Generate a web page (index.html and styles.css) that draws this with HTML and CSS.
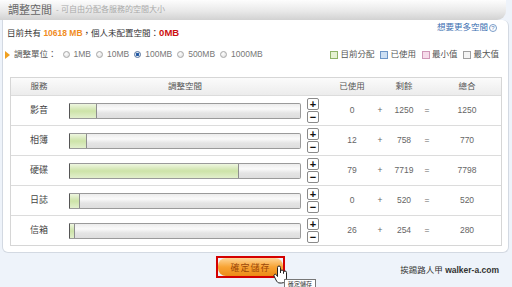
FILE: index.html
```html
<!DOCTYPE html>
<html lang="zh-Hant">
<head>
    <meta charset="UTF-8">
    <title>調整空間</title>
    <link rel="stylesheet" href="styles.css">
</head>
<body>
    <header class="title-bar">
        <span class="title">調整空間</span>
        <span class="subtitle">- 可自由分配各服務的空間大小</span>
    </header>

    <main class="panel">
        <div class="top-line">
            <p class="summary">目前共有 <b class="total">10618 MB</b>，個人未配置空間：<b class="free">0MB</b></p>
            <a href="#" class="more-link">想要更多空間<span class="help">?</span></a>
        </div>

        <div class="unit-row">
            <div class="units">
                <span class="arrow"></span>
                <span class="unit-label">調整單位：</span>
                <label class="radio"><span class="dot"></span>1MB</label>
                <label class="radio"><span class="dot"></span>10MB</label>
                <label class="radio"><span class="dot checked"></span>100MB</label>
                <label class="radio"><span class="dot"></span>500MB</label>
                <label class="radio"><span class="dot"></span>1000MB</label>
            </div>
            <div class="legend">
                <span class="key"><span class="box green"></span>目前分配</span>
                <span class="key"><span class="box blue"></span>已使用</span>
                <span class="key"><span class="box pink"></span>最小值</span>
                <span class="key"><span class="box gray"></span>最大值</span>
            </div>
        </div>

        <div class="quota-table">
            <div class="row head">
                <span>服務</span>
                <span>調整空間</span>
                <span></span>
                <span>已使用</span>
                <span></span>
                <span>剩餘</span>
                <span></span>
                <span>總合</span>
            </div>
            <div class="row">
                <span class="name">影音</span>
                <span class="bar"><span class="fill" style="width: 27px"></span></span>
                <span class="steps"><i>+</i><i>−</i></span>
                <span>0</span><span>+</span><span>1250</span><span>=</span><span>1250</span>
            </div>
            <div class="row">
                <span class="name">相簿</span>
                <span class="bar"><span class="fill" style="width: 17px"></span></span>
                <span class="steps"><i>+</i><i>−</i></span>
                <span>12</span><span>+</span><span>758</span><span>=</span><span>770</span>
            </div>
            <div class="row">
                <span class="name">硬碟</span>
                <span class="bar"><span class="fill" style="width: 169px"></span></span>
                <span class="steps"><i>+</i><i>−</i></span>
                <span>79</span><span>+</span><span>7719</span><span>=</span><span>7798</span>
            </div>
            <div class="row">
                <span class="name">日誌</span>
                <span class="bar"><span class="fill" style="width: 10px"></span></span>
                <span class="steps"><i>+</i><i>−</i></span>
                <span>0</span><span>+</span><span>520</span><span>=</span><span>520</span>
            </div>
            <div class="row">
                <span class="name">信箱</span>
                <span class="bar"><span class="fill" style="width: 5px"></span></span>
                <span class="steps"><i>+</i><i>−</i></span>
                <span>26</span><span>+</span><span>254</span><span>=</span><span>280</span>
            </div>
        </div>
    </main>

    <footer class="actions">
        <span class="focus-ring"><button class="save">確定儲存</button></span>
        <span class="credit">挨踢路人甲 <b>walker-a.com</b></span>
    </footer>

    <!-- mouse pointer and tooltip over the save button -->
    <svg class="pointer" width="16" height="20" viewBox="0 0 16 20">
        <path d="M4.5 11.5V2.5a1.5 1.5 0 0 1 3 0V8V6.5a1.5 1.5 0 0 1 3 0V8.5V7.5a1.5 1.5 0 0 1 3 0V13c0 3-2 5-5 5H7c-2 0-3-1-4-3l-2-4a1.3 1.3 0 0 1 2.2-1.3Z" fill="#fff" stroke="#222" stroke-width="1"/>
    </svg>
    <div class="tooltip">確定儲存</div>
</body>
</html>
```

FILE: styles.css
```css
/* Basic Reset */
* {
    margin: 0;
    padding: 0;
    box-sizing: border-box;
}

html, body {
    height: 287px;
    overflow: hidden;
}

body {
    position: relative;
    background: #eef3fa;
    color: #444;
    font-family: "Liberation Sans", "Noto Sans CJK TC", sans-serif;
    font-size: 8.5px;
    line-height: 1.3;
}

/* Title bar */
.title-bar {
    display: flex;
    align-items: center;
    gap: 4px;
    height: 20px;
    margin-right: 6px;
    padding-left: 8px;
    background: linear-gradient(#fdfdfd, #e9e9e9 55%, #d2d2d2);
    border-radius: 0 0 9px 0;
}

.title {
    font-size: 11px;
    color: #666;
}

.subtitle {
    font-size: 8px;
    color: #aaa;
}

/* Main panel */
.panel {
    margin: 0 3px 0 2px;
    padding: 0 6px 6px 2px;
    background: #fff;
    border: 1px solid #d3d9e2;
    border-top: none;
    border-radius: 0 6px 6px 6px;
}

.top-line {
    display: flex;
    justify-content: space-between;
    height: 19px;
}

.summary {
    align-self: flex-end;
    padding-left: 2px;
    line-height: 11px;
    color: #333;
}

.total {
    color: #f08c1e;
}

.free {
    color: #cc1010;
    font-size: 9.5px;
}

.more-link {
    align-self: flex-start;
    margin-top: 2px;
    margin-right: 5px;
    display: flex;
    align-items: center;
    gap: 1px;
    line-height: 11px;
    color: #3a6eb0;
    text-decoration: none;
}

.help {
    display: inline-flex;
    align-items: center;
    justify-content: center;
    width: 8px;
    height: 8px;
    border: 1px solid #7a9cc8;
    border-radius: 50%;
    font-size: 6px;
    line-height: 1;
    color: #5a80b8;
}

/* Unit selector and legend */
.unit-row {
    display: flex;
    justify-content: space-between;
    align-items: center;
    height: 14px;
    margin-top: 9px;
    padding-right: 3px;
}

.units,
.legend {
    display: flex;
    align-items: center;
}

.arrow {
    width: 0;
    height: 0;
    border-top: 4px solid transparent;
    border-bottom: 4px solid transparent;
    border-left: 5px solid #f0a020;
    margin-right: 4px;
}

.unit-label {
    color: #555;
    margin-right: 6px;
}

.radio {
    display: flex;
    align-items: center;
    gap: 4px;
    margin-right: 5px;
    color: #777;
}

.dot {
    width: 7px;
    height: 7px;
    border: 1px solid #a8a8a8;
    border-radius: 50%;
    background: radial-gradient(circle at 40% 35%, #fff, #d8d8d8);
}

.dot.checked {
    border-color: #57729a;
    background: radial-gradient(circle, #1d4f96 0, #2d65b0 45%, #dce6f2 55%);
}

.key {
    display: flex;
    align-items: center;
    gap: 2px;
    margin-left: 6px;
    color: #555;
}

.box {
    width: 8px;
    height: 8px;
    border: 1px solid;
}

.box.green { background: #e6f2d2; border-color: #90b468; }
.box.blue { background: #cddff3; border-color: #6e96c8; }
.box.pink { background: #f6dcea; border-color: #d098b8; }
.box.gray { background: #f4f4f4; border-color: #a0a0a0; }

/* Quota table */
.quota-table {
    margin: 15px 0 0 5px;
    border: 1px solid #d6d6d6;
}

.row {
    display: grid;
    grid-template-columns: 56px 236px 28px 42px 14px 34px 12px 1fr;
    align-items: center;
    height: 30px;
    border-bottom: 1px solid #dcdcdc;
    text-align: center;
    color: #666;
}

.row:last-child {
    height: 29px;
    border-bottom: none;
}

.row.head {
    height: 18px;
    background: linear-gradient(#fbfbfb, #ececec);
    color: #555;
}

.name {
    color: #444;
    font-size: 9px;
}

.bar {
    display: flex;
    width: 232px;
    height: 16px;
    margin-left: 2px;
    border: 1px solid #9a9a9a;
    border-left-color: #555;
    border-radius: 0 2px 2px 0;
    background: linear-gradient(#ececec, #fafafa 35%, #e4e4e4 65%, #dedede);
}

.fill {
    height: 100%;
    border-right: 1px solid #8e8e8e;
    background: linear-gradient(#eef6e0, #cde3a8 50%, #e2efcc);
}

.steps {
    display: flex;
    flex-direction: column;
    gap: 1px;
    margin-left: 4px;
}

.steps i {
    display: flex;
    align-items: center;
    justify-content: center;
    width: 12px;
    height: 12px;
    border: 1px solid #8a8a8a;
    border-radius: 2px;
    background: #fff;
    font-style: normal;
    font-weight: bold;
    font-size: 11px;
    line-height: 1;
    color: #111;
}

/* Footer */
.actions {
    display: flex;
    align-items: flex-end;
    justify-content: space-between;
    margin-top: 3px;
    padding: 0 13px 0 216px;
}

.focus-ring {
    display: block;
    border: 2px solid #d40000;
}

.save {
    display: block;
    width: 65px;
    height: 18px;
    border: none;
    border-radius: 8px;
    background: linear-gradient(#ffd698, #f8a434 50%, #ec8a16);
    color: #9c4608;
    font-family: inherit;
    font-size: 9px;
    letter-spacing: 1px;
}

.credit {
    margin-bottom: 2px;
    color: #333;
}

/* Pointer overlay */
.pointer {
    position: absolute;
    left: 273px;
    top: 265px;
}

.tooltip {
    position: absolute;
    left: 284px;
    top: 279px;
    padding: 0 3px;
    background: #fff;
    border: 1px solid #777;
    border-bottom: none;
    font-size: 6px;
    line-height: 8px;
    color: #333;
}
```
